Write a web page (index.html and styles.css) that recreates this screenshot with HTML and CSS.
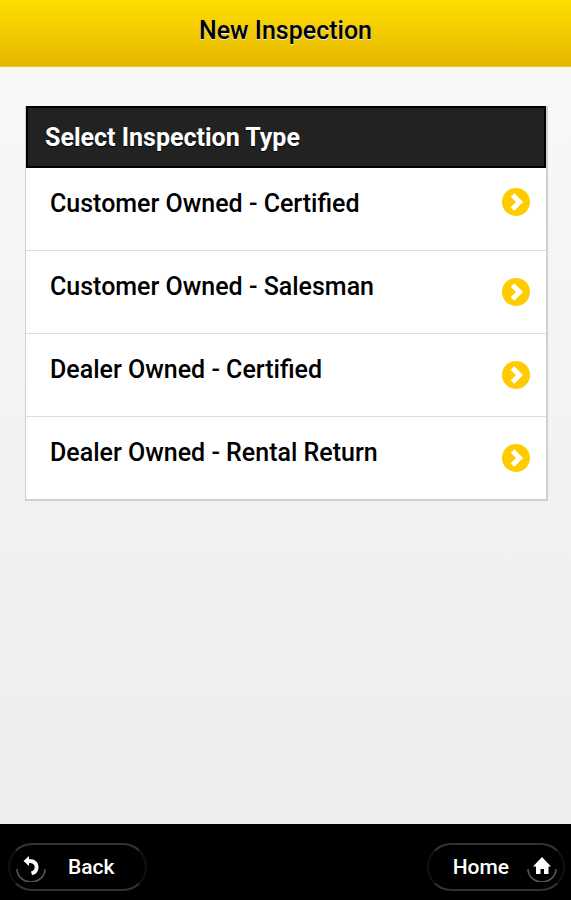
FILE: index.html
```html
<!DOCTYPE html>
<html lang="en">
<head>
<meta charset="utf-8">
<meta name="viewport" content="width=device-width, initial-scale=1">
<title>New Inspection</title>
<link rel="stylesheet" href="styles.css">
</head>
<body>
<svg class="sprite" aria-hidden="true">
  <symbol id="arrow" viewBox="0 0 28 28">
    <circle cx="14" cy="14" r="14" fill="#fc0"/>
    <path d="M10.500 7 17.500 14 10.500 21" fill="none" stroke="#fff" stroke-width="5"/>
  </symbol>
</svg>
<header class="page-header">
  <h1 class="page-title">New Inspection</h1>
</header>
<main class="content">
  <section class="panel">
    <h2 class="panel-title">Select Inspection Type</h2>
    <ul class="list">
      <li><a class="item item-first" href="#"><span>Customer Owned - Certified</span><svg class="arrow"><use href="#arrow"/></svg></a></li>
      <li><a class="item" href="#"><span>Customer Owned - Salesman</span><svg class="arrow"><use href="#arrow"/></svg></a></li>
      <li><a class="item" href="#"><span>Dealer Owned - Certified</span><svg class="arrow"><use href="#arrow"/></svg></a></li>
      <li><a class="item" href="#"><span>Dealer Owned - Rental Return</span><svg class="arrow"><use href="#arrow"/></svg></a></li>
    </ul>
  </section>
</main>
<footer class="page-footer">
  <button class="nav-button nav-back" type="button">
    <svg class="nav-icon" viewBox="0 0 30 30" aria-hidden="true">
      <path d="M1 17a14 13 0 0 0 28 0" fill="none" stroke="#555" stroke-width="1.6"/>
      <path d="M7.500 9 13 4v3c6 0 9.500 3 9.500 8 0 4.500-2.500 7.500-6.500 8l-1-3.500c2.300-.4 3.700-2 3.700-4.300 0-2.700-2-4.200-5.700-4.200v3z" fill="#fff"/>
    </svg>
    <span class="nav-label">Back</span>
  </button>
  <button class="nav-button nav-home" type="button">
    <span class="nav-label">Home</span>
    <svg class="nav-icon" viewBox="0 0 30 30" aria-hidden="true">
      <path d="M1 17a14 13 0 0 0 28 0" fill="none" stroke="#555" stroke-width="1.600"/>
      <path d="M15 5 24 14.500H21.500V22H17V17H13.500V22H9V14.500H6z" fill="#fff"/>
    </svg>
  </button>
</footer>
</body>
</html>
```
FILE: styles.css
```css
* {
  box-sizing: border-box;
}

body {
  display: flex;
  flex-direction: column;
  min-height: 100vh;
  margin: 0;
  background: linear-gradient(#f9f9f9, #ececec);
  color: #000;
  font-family: Roboto, "Liberation Sans", sans-serif;
}

.sprite {
  position: absolute;
  width: 0;
  height: 0;
}

.page-header {
  padding: 16px 24px 20px;
  border-bottom: 1px solid #efc51c;
  background: linear-gradient(#ffde00, #e5b600);
  text-align: center;
}

.page-title {
  margin: 0;
  font-size: 25px;
  line-height: 30px;
  font-weight: 500;
  text-shadow: 0 1px 1px #eee;
}

.content {
  flex: 1;
  padding: 39px 23px 24px 25px;
}

.panel {
  border: solid #d0d0d0;
  border-width: 0 2px 2px 1px;
}

.panel-title {
  margin: 0;
  padding: 15px 17px 14px;
  border: 2px solid #000;
  background: #222;
  color: #fff;
  font-size: 25px;
  line-height: 29px;
  font-weight: 700;
  text-shadow: 0 1px 1px #000;
}

.list {
  margin: 0;
  padding: 0;
  list-style: none;
  background: #fff;
}

.list li + li {
  border-top: 1px solid #ddd;
}

.item {
  display: flex;
  justify-content: space-between;
  align-items: flex-start;
  padding: 20px 16px 20px 24px;
  color: #000;
  font-size: 25px;
  line-height: 32px;
  font-weight: 500;
  text-decoration: none;
}

.arrow {
  flex: none;
  width: 28px;
  height: 28px;
  margin: 7px 0;
}

.item-first .arrow {
  margin: 0 0 14px;
}

.page-footer {
  display: flex;
  justify-content: space-between;
  padding: 19px 6px 9px 8px;
  background: #000;
}

.nav-button {
  display: flex;
  align-items: center;
  height: 48px;
  padding: 0 6px;
  border: 2px solid #333;
  border-radius: 24px;
  border-right-color: #111;
  border-left-color: #111;
  background: #000;
  color: #fff;
  font: 500 21px/26px Roboto, "Liberation Sans", sans-serif;
}

.nav-back {
  gap: 22px;
  padding-right: 30px;
}

.nav-home {
  gap: 18px;
  padding-left: 24px;
}

.nav-icon {
  width: 30px;
  height: 30px;
}
```
